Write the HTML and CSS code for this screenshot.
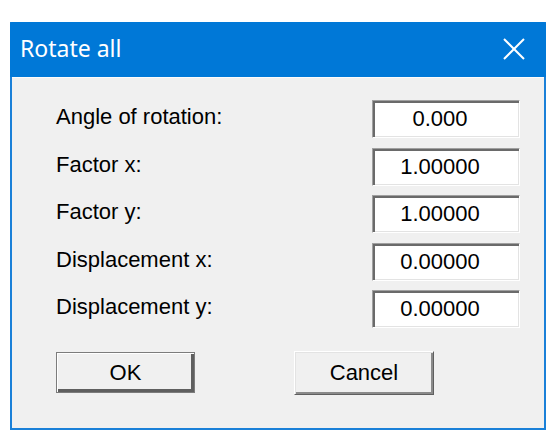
FILE: index.html
```html
<!DOCTYPE html>
<html lang="en">
<head>
<meta charset="utf-8">
<title>Rotate all</title>
<link rel="stylesheet" href="styles.css">
</head>
<body>
<div class="window">
  <div class="titlebar">
    <span class="title">Rotate all</span>
    <span class="close" aria-label="Close">
      <svg width="22" height="22" viewBox="0 0 22 22"><path d="M1 1 L21 21 M21 1 L1 21" stroke="#fff" stroke-width="2" fill="none"/></svg>
    </span>
  </div>
  <div class="content">
    <div class="form">
      <div class="label">Angle of rotation:</div>
      <div class="field">0.000</div>
      <div class="label">Factor x:</div>
      <div class="field">1.00000</div>
      <div class="label">Factor y:</div>
      <div class="field">1.00000</div>
      <div class="label">Displacement x:</div>
      <div class="field">0.00000</div>
      <div class="label">Displacement y:</div>
      <div class="field">0.00000</div>
    </div>
    <div class="buttons">
      <div class="btn btn-default">OK</div>
      <div class="btn btn-cancel">Cancel</div>
    </div>
  </div>
</div>
</body>
</html>
```

FILE: styles.css
```css
html, body {
  margin: 0;
  padding: 0;
  background: #ffffff;
}

.window {
  box-sizing: border-box;
  margin: 22px 0 0 10px;
  width: 536px;
  height: 408px;
  border: 2px solid #1a80d8;
  border-top: none;
  background: #f0f0f0;
  display: flex;
  flex-direction: column;
}

.titlebar {
  height: 55px;
  background: #0078d7;
  display: flex;
  align-items: center;
  justify-content: space-between;
  margin: 0 -2px 0 -2px;
  padding-left: 10px;
  padding-right: 21px;
  border-radius: 2px 2px 0 0;
}

.title {
  font-family: "Noto Sans", "Open Sans", sans-serif;
  font-size: 23px;
  color: #ffffff;
  line-height: 1;
  margin-top: -3px;
}

.close {
  display: flex;
  width: 22px;
  height: 22px;
  margin-top: -2px;
}

.content {
  flex: 1;
  border-top: 1px solid #fbfbfb;
  padding: 22px 0 0 44px;
  font-family: "Liberation Sans", Arial, sans-serif;
  font-size: 22px;
  color: #000;
}

.form {
  display: grid;
  grid-template-columns: 316px 148px;
  grid-auto-rows: 38px;
  row-gap: 9.5px;
}

.label {
  line-height: 30px;
  padding-top: 2px;
}

.field {
  box-sizing: border-box;
  background: #ffffff;
  border-style: solid;
  border-width: 1px;
  border-color: #a0a0a0 #ffffff #ffffff #a0a0a0;
  box-shadow: inset 2px 2px 0 #6a6a6a, inset -1px -1px 0 #e3e3e3;
  text-align: center;
  padding: 0 14px 0 2px;
  line-height: 36px;
}

.buttons {
  display: flex;
  gap: 99px;
  margin-top: 23px;
}

.btn {
  box-sizing: border-box;
  height: 42px;
  display: flex;
  align-items: center;
  justify-content: center;
  background: #f0f0f0;
}

.btn-default {
  width: 139px;
  margin-top: 1px;
  height: 41px;
  border: 1px solid #7c7c7c;
  box-shadow: inset 1px 1px 0 #ffffff, inset -3px -3px 0 #5f5f5f;
}

.btn-cancel {
  width: 140px;
  height: 44px;
  border-style: solid;
  border-width: 1px;
  border-color: #ffffff #5f5f5f #5f5f5f #ffffff;
  box-shadow: inset 1px 1px 0 #e3e3e3, inset -2px -2px 0 #8a8a8a;
}
```
